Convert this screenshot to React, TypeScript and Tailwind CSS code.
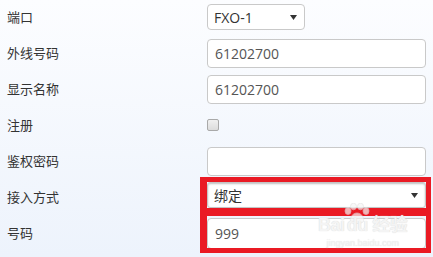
import React from "react";

const labelCls =
  "w-[207px] shrink-0 pl-[7px] text-[13px] text-[#333] leading-none";
const inputCls =
  "w-[219px] h-[29px] rounded-[4px] border border-[#c9c9c9] bg-white px-[7px] flex items-center text-[14px] text-[#555]";

function Arrow() {
  return (
    <svg width="7" height="5" viewBox="0 0 7 5" className="shrink-0">
      <path d="M0 0 H7 L3.5 5 Z" fill="#333" />
    </svg>
  );
}

export default function App() {
  return (
    <div
      className="relative w-[433px] h-[257px] overflow-hidden bg-gradient-to-b from-[#fcfdff] to-[#edf3fc]"
      style={{ fontFamily: '"Open Sans", "Noto Sans CJK SC", sans-serif' }}
    >
      <div className="flex flex-col mt-[-1px]">
        <div className="h-[36px] flex items-center">
          <div className={labelCls}>端口</div>
          <div className="w-[98px] h-[26px] rounded-[4px] border border-[#c9c9c9] bg-white pl-[6px] pr-[7px] flex items-center justify-between text-[14px] text-[#333]">
            <span>FXO-1</span>
            <Arrow />
          </div>
        </div>
        <div className="h-[36px] flex items-center">
          <div className={labelCls}>外线号码</div>
          <div className={inputCls}>61202700</div>
        </div>
        <div className="h-[36px] flex items-center">
          <div className={labelCls}>显示名称</div>
          <div className={inputCls}>61202700</div>
        </div>
        <div className="h-[36px] flex items-center">
          <div className={labelCls}>注册</div>
          <div className="w-[12px] h-[12px] mb-[1px] rounded-[2px] border border-[#a9a9a9] bg-gradient-to-b from-[#f0f0f0] to-[#dcdcdc]" />
        </div>
        <div className="h-[36px] flex items-center">
          <div className={labelCls}>鉴权密码</div>
          <div className={inputCls}></div>
        </div>
        <div className="h-[36px] flex items-center">
          <div className={labelCls}>接入方式</div>
          <div className="w-[219px] h-[26px] mb-[4px] rounded-[3px] border border-[#c4c4c4] bg-white shadow-[inset_0_1px_2px_rgba(0,0,0,0.25)] pl-[6px] pr-[7px] flex items-center justify-between text-[14px] text-[#333]">
            <span style={{ fontFamily: '"Noto Sans CJK SC", sans-serif' }}>绑定</span>
            <Arrow />
          </div>
        </div>
        <div className="h-[36px] flex items-center">
          <div className={labelCls}>号码</div>
          <div className="w-[219px] h-[31px] rounded-[4px] border border-[#c9c9c9] bg-white px-[7px] flex items-center text-[14px] text-[#555]">
            999
          </div>
        </div>
      </div>

      {/* red annotation */}
      <div className="absolute left-[200px] top-[177px] w-[231px] h-[76px] border-t-[5px] border-l-[7px] border-r-[5px] border-b-[5px] border-[#ea1a24] pointer-events-none" />
      <div className="absolute left-[200px] top-[208px] w-[231px] h-[8px] bg-[#ea1a24] pointer-events-none" />

      {/* watermark */}
      <svg
        className="absolute left-[343px] top-[203px] pointer-events-none opacity-70"
        width="28"
        height="22"
        viewBox="0 0 28 22"
      >
        <g fill="#f6f6f6" stroke="#dedede" strokeWidth="0.8">
          <ellipse cx="5" cy="8" rx="3" ry="3.5" />
          <ellipse cx="10.5" cy="3.5" rx="3" ry="3.3" />
          <ellipse cx="17.5" cy="3.5" rx="3" ry="3.3" />
          <ellipse cx="23" cy="8" rx="3" ry="3.5" />
          <path d="M14 10 C9 10 6 16 8 19 C10 21 18 21 20 19 C22 16 19 10 14 10 Z" />
        </g>
      </svg>
      <div className="absolute left-[318px] top-[216px] flex flex-col items-center text-[#f4f4f4] pointer-events-none leading-none">
        <div
          className="text-[18px] font-bold tracking-tight"
          style={{ fontFamily: '"Liberation Sans", "Noto Sans CJK SC", sans-serif', textShadow: "0 0 1px #d0d0d0" }}
        >
          Bai<span className="ml-[2px]">du</span> 经验
        </div>
        <div
          className="mt-[5px] text-[9px]"
          style={{ fontFamily: '"Liberation Sans", sans-serif', textShadow: "0 0 1px #d6d6d6" }}
        >
          jingyan.baidu.com
        </div>
      </div>
    </div>
  );
}
